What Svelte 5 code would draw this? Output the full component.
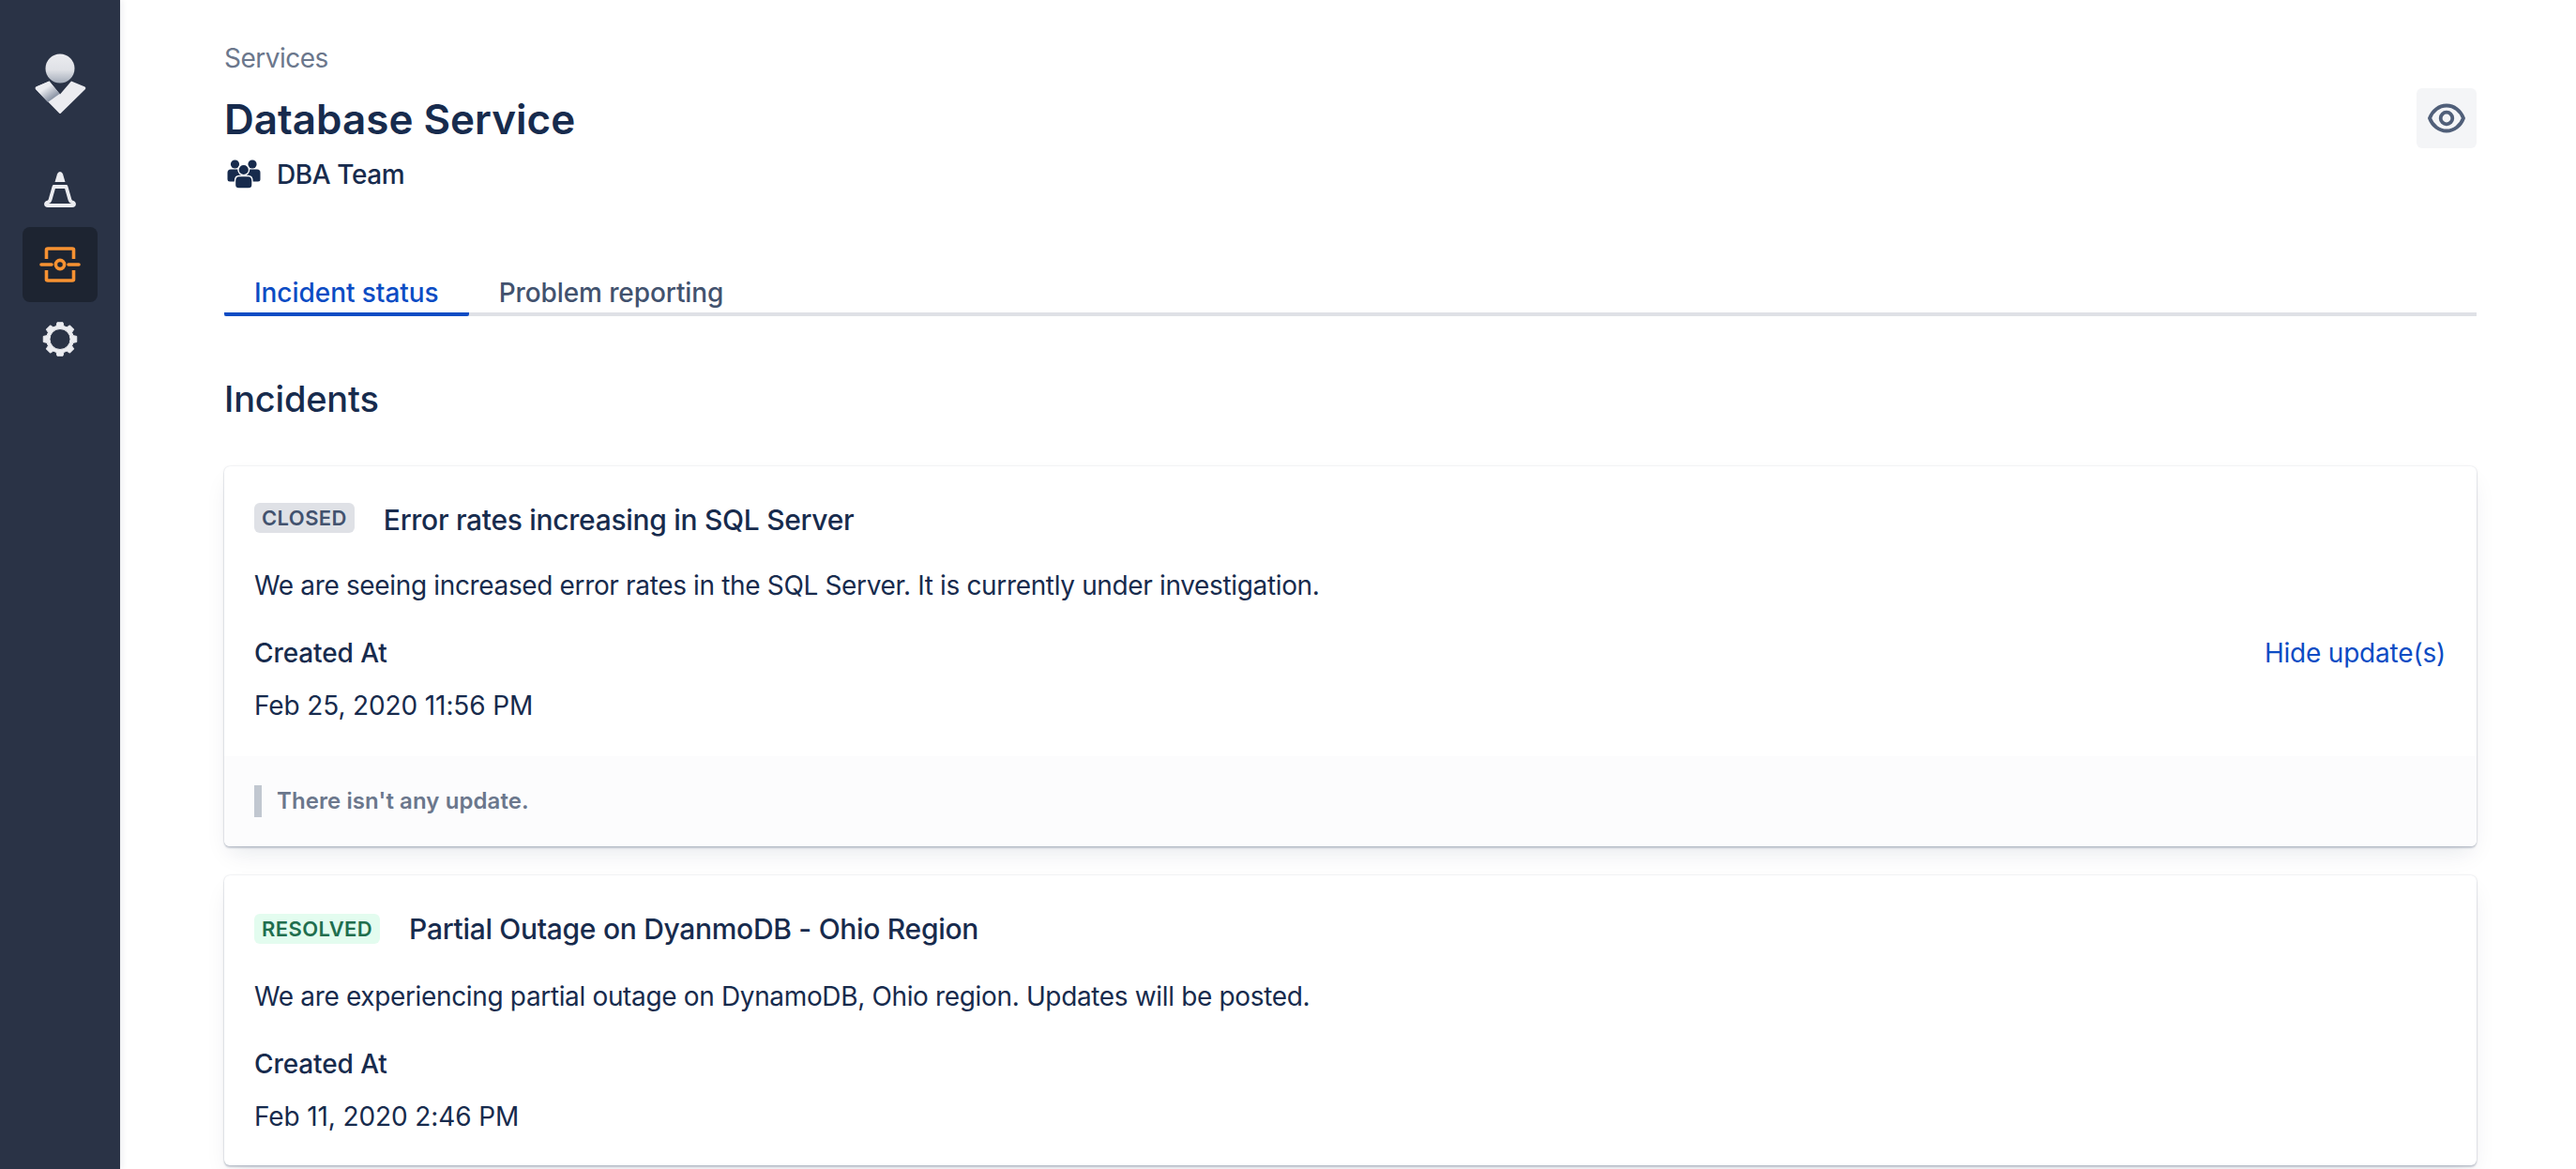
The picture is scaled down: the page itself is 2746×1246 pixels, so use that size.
<script>
  const incidents = [
    {
      status: "CLOSED",
      kind: "closed",
      title: "Error rates increasing in SQL Server",
      text: "We are seeing increased error rates in the SQL Server. It is currently under investigation.",
      created: "Feb 25, 2020 11:56 PM",
      showHide: true
    },
    {
      status: "RESOLVED",
      kind: "resolved",
      title: "Partial Outage on DyanmoDB - Ohio Region",
      text: "We are experiencing partial outage on DynamoDB, Ohio region. Updates will be posted.",
      created: "Feb 11, 2020 2:46 PM",
      showHide: false
    }
  ];

  // 8 toothed gear outline with a round hole
  function gearPath(cx, cy, body, tip, hole) {
    let d = "";
    const step = Math.PI / 4;
    for (let i = 0; i < 8; i++) {
      const a = -Math.PI / 2 + i * step;
      const pts = [
        [body, a - 0.27],
        [tip, a - 0.17],
        [tip, a + 0.17],
        [body, a + 0.27]
      ];
      for (const [r, t] of pts) {
        const x = (cx + r * Math.cos(t)).toFixed(2);
        const y = (cy + r * Math.sin(t)).toFixed(2);
        d += (d ? "L" : "M") + x + " " + y + " ";
      }
    }
    d += "Z ";
    d += `M${cx + hole} ${cy} A${hole} ${hole} 0 1 0 ${cx - hole} ${cy} A${hole} ${hole} 0 1 0 ${cx + hole} ${cy}Z`;
    return d;
  }
</script>

<div class="page">
  <nav class="sidebar">
    <svg class="logo" width="64" height="68" viewBox="0 0 64 68" aria-label="logo">
      <defs>
        <linearGradient id="ball" x1="0" y1="0" x2="0" y2="1">
          <stop offset="0" stop-color="#ebecf0" />
          <stop offset="0.55" stop-color="#dfe1e6" />
          <stop offset="1" stop-color="#a5adba" />
        </linearGradient>
        <linearGradient id="wing" x1="0.2" y1="0.1" x2="0.75" y2="0.8">
          <stop offset="0.35" stop-color="#ebecf0" />
          <stop offset="1" stop-color="#8993a4" />
        </linearGradient>
      </defs>
      <circle cx="32" cy="17" r="15.500" fill="url(#ball)" />
      <path d="M6.500 36.500 L20.500 30.500 L32 44.500 L44 30.500 L58.500 36.500 Q60 37.500 59 39 L33 64.500 Q32 65.500 31 64.500 L6 39 Q5 37.500 6.500 36.500Z" fill="#ebecf0" />
      <path d="M6.500 36.500 L20.500 30.500 L31.500 44 L19 53 L6 39 Q5 37.500 6.500 36.500Z" fill="url(#wing)" />
    </svg>

    <a class="item cone" href="#cone" aria-label="Incidents">
      <svg width="40" height="44" viewBox="0 0 40 44">
        <path d="M14.500 14 L17 5.500 Q17.800 3 20 3 Q22.200 3 23 5.500 L25.500 14 Z" fill="#ebecf0" />
        <path d="M13.500 19 H26.500 L30.500 33 Q31 35 33 35.500 Q35 36 35 37.500 Q35 39 33 39 H7 Q5 39 5 37.500 Q5 36 7 35.500 Q9 35 9.500 33 Z" fill="none" stroke="#ebecf0" stroke-width="3.800" stroke-linejoin="round" />
      </svg>
    </a>

    <a class="item active" href="#services" aria-label="Services">
      <svg width="44" height="40" viewBox="0 0 44 40" fill="none" stroke="#f79232" stroke-width="3.600">
        <path d="M7.500 14 V4 Q7.500 3 9 3 H35 Q36.500 3 36.500 4 V14" />
        <path d="M7.500 26 V36 Q7.500 37 9 37 H35 Q36.500 37 36.500 36 V26" />
        <path d="M2 20 H13" stroke-linecap="round" />
        <path d="M31 20 H42" stroke-linecap="round" />
        <circle cx="22" cy="20" r="4.600" />
      </svg>
    </a>

    <a class="item gear" href="#settings" aria-label="Settings">
      <svg width="40" height="40" viewBox="0 0 40 40">
        <path d={gearPath(20, 19.500, 14.500, 18, 11)} fill="#ebecf0" fill-rule="evenodd" stroke="#ebecf0" stroke-width="1" stroke-linejoin="round" />
      </svg>
    </a>
  </nav>

  <main class="content">
    <header class="head">
      <div>
        <div class="crumb">Services</div>
        <h1>Database Service</h1>
        <div class="team">
          <svg width="36" height="32" viewBox="0 0 36 32" fill="#172b4d" aria-hidden="true">
            <circle cx="8.500" cy="5" r="4.600" />
            <circle cx="27" cy="5" r="4.600" />
            <path d="M0.500 14 Q0.500 10.500 4 10.500 H32 Q35.500 10.500 35.500 14 V21 Q35.500 23.500 33 23.500 H3 Q0.500 23.500 0.500 21Z" />
            <g stroke="#fff" stroke-width="1.400">
              <circle cx="17.750" cy="11" r="5.800" />
              <path d="M8.500 23 Q8.500 17.500 13 17.500 H22.500 Q27 17.500 27 23 V27 Q27 31 23 31 H12.500 Q8.500 31 8.500 27Z" />
            </g>
          </svg>
          <span>DBA Team</span>
        </div>
      </div>
      <button class="watch" aria-label="Watch">
        <svg width="40" height="32" viewBox="0 0 40 32" fill="none" stroke="#505f79" stroke-width="3.800">
          <path d="M2 16 C5 8 12 2.500 20 2.500 C28 2.500 35 8 38 16 C35 24 28 29.500 20 29.500 C12 29.500 5 24 2 16Z" />
          <circle cx="20" cy="16" r="6.300" />
        </svg>
      </button>
    </header>

    <div class="tabs">
      <button class="tab on">Incident status</button>
      <button class="tab">Problem reporting</button>
    </div>

    <h2>Incidents</h2>

    <div class="list">
      {#each incidents as inc}
        <section class="card">
          <div class="card-body">
            <div class="title-row">
              <span class="badge {inc.kind}">{inc.status}</span>
              <h3>{inc.title}</h3>
            </div>
            <p class="desc">{inc.text}</p>
            <div class="meta">
              <div>
                <div class="label">Created At</div>
                <div class="date">{inc.created}</div>
              </div>
              {#if inc.showHide}
                <a class="toggle" href="#updates">Hide update(s)</a>
              {/if}
            </div>
          </div>
          {#if inc.showHide}
            <div class="updates">
              <div class="note">There isn't any update.</div>
            </div>
          {/if}
        </section>
      {/each}
    </div>
  </main>
</div>

<style>
  :global(body) {
    margin: 0;
    background: #fff;
  }

  .page {
    display: flex;
    height: 100vh;
    overflow: hidden;
    font-family: Inter, "Liberation Sans", sans-serif;
    color: #172b4d;
  }

  .sidebar {
    width: 128px;
    flex: none;
    background: #2a3346;
    display: flex;
    flex-direction: column;
    align-items: center;
    padding-top: 56px;
    box-sizing: border-box;
    box-shadow: 2px 0 6px rgba(9, 30, 66, 0.08);
  }

  .logo {
    margin-bottom: 38px;
  }

  .item {
    width: 80px;
    height: 80px;
    border-radius: 8px;
    display: flex;
    align-items: center;
    justify-content: center;
  }

  .item.active {
    background: #1d2431;
  }

  .content {
    flex: 1;
    min-width: 0;
    padding: 44px 106px 0 111px;
  }

  .head {
    display: flex;
    justify-content: space-between;
    align-items: flex-start;
  }

  .crumb {
    font-size: 28px;
    line-height: 36px;
    letter-spacing: -0.5px;
    color: #6b778c;
  }

  h1 {
    margin: 19px 0 0;
    font-size: 44px;
    line-height: 56px;
    font-weight: 600;
  }

  .team {
    display: flex;
    align-items: center;
    gap: 17px;
    margin-top: 11px;
    padding-left: 3px;
    font-size: 28px;
    font-weight: 500;
    line-height: 40px;
    letter-spacing: -0.4px;
  }

  .watch {
    width: 64px;
    height: 64px;
    margin-top: 50px;
    padding: 0;
    border: 0;
    border-radius: 6px;
    background: #f4f5f7;
    display: flex;
    align-items: center;
    justify-content: center;
  }

  .tabs {
    display: flex;
    margin-top: 88px;
    border-bottom: 4px solid #dfe1e6;
  }

  .tab {
    font: inherit;
    font-size: 28px;
    font-weight: 500;
    line-height: 36px;
    letter-spacing: -0.1px;
    color: #42526e;
    background: none;
    border: 0;
    padding: 0 32px 3px;
    margin-bottom: -4px;
    border-bottom: 4px solid transparent;
  }

  .tab.on {
    letter-spacing: -0.05px;
    color: #0c4cc4;
    border-bottom-color: #0c4cc4;
    border-radius: 2px;
  }

  h2 {
    margin: 64px 0 0;
    font-size: 38px;
    line-height: 48px;
    font-weight: 500;
    letter-spacing: -0.2px;
  }

  .list {
    display: flex;
    flex-direction: column;
    gap: 31px;
    margin-top: 48px;
  }

  .card {
    border-radius: 6px;
    background: #fff;
    box-shadow: 0 2px 2px rgba(9, 30, 66, 0.2), 0 0 2px rgba(9, 30, 66, 0.18), 0 12px 24px -6px rgba(9, 30, 66, 0.1);
  }

  .card-body {
    padding: 39px 32px 34px;
  }

  .card + .card .card-body {
    padding: 41px 32px 32px;
  }

  .card + .card h3 {
    margin: -2px 0 2px;
  }

  .title-row {
    display: flex;
    align-items: flex-start;
    gap: 31px;
  }

  .badge {
    height: 32px;
    line-height: 32px;
    padding: 0 8px;
    border-radius: 6px;
    font-size: 22px;
    font-weight: 600;
    letter-spacing: 0.4px;
  }

  .badge.closed {
    background: #dfe1e6;
    color: #42526e;
  }

  .badge.resolved {
    background: #e3fcef;
    color: #216e4e;
  }

  h3 {
    margin: 0;
    font-size: 30px;
    line-height: 36px;
    font-weight: 500;
    letter-spacing: -0.3px;
  }

  .desc {
    margin: 32px 0 0;
    font-size: 28px;
    line-height: 40px;
    letter-spacing: -0.35px;
  }

  .meta {
    display: flex;
    justify-content: space-between;
    margin-top: 32px;
  }

  .label {
    font-size: 28px;
    line-height: 40px;
    font-weight: 500;
    letter-spacing: -0.1px;
  }

  .date {
    margin-top: 16px;
    font-size: 28px;
    line-height: 40px;
    letter-spacing: -0.12px;
  }

  .toggle {
    font-size: 28px;
    line-height: 40px;
    letter-spacing: -0.2px;
    color: #0c4cc4;
    text-decoration: none;
    margin-right: 1px;
  }

  .updates {
    background: #fcfcfd;
    padding: 31px 32px 31px;
    border-radius: 0 0 6px 6px;
  }

  .note {
    border-left: 8px solid #c1c7d0;
    padding-left: 16px;
    font-size: 24px;
    line-height: 34px;
    font-weight: 600;
    letter-spacing: 0.08px;
    color: #6b778c;
  }
</style>
